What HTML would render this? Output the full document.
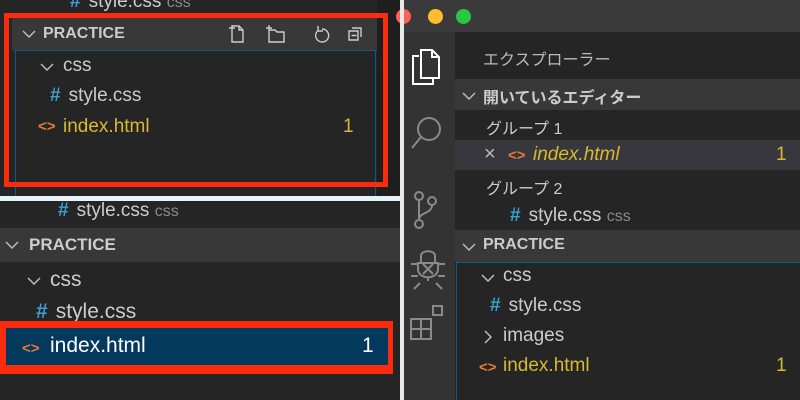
<!DOCTYPE html>
<html><head><meta charset="utf-8"><style>
*{margin:0;padding:0;box-sizing:border-box}
body{width:800px;height:400px;overflow:hidden;background:#252526;position:relative;font-family:"Liberation Sans","Noto Sans CJK JP",sans-serif;color:#ccc}
.a{position:absolute;white-space:nowrap}
.t{font-size:19px;color:#ccc}
.b{font-size:21px}
.h{font-size:16px;font-weight:bold;color:#ccc}
.y{color:#d7ba2e}
.hash{color:#3d9fd0;font-weight:bold;margin-right:8px}
.ang{color:#e8793a;font-size:15px;font-weight:bold}
.dim{color:#8b8b8b;font-size:16px}
</style></head><body>
<svg width="0" height="0" style="position:absolute"><defs>
<symbol id="cv" viewBox="0 0 14 8"><path d="M1 1l6 6 6-6" fill="none" stroke="#bbb" stroke-width="1.5"/></symbol>
<symbol id="cr" viewBox="0 0 8 14"><path d="M1 1l6 6-6 6" fill="none" stroke="#bbb" stroke-width="1.5"/></symbol>
</defs></svg>
<!-- top-left panel -->
<div class="a" style="left:377px;top:0;width:23px;height:197px;background:#1e1e1e"></div>
<div class="a t" style="left:70px;top:-9px"><span class="hash">#</span>style.css <span class="dim">css</span></div>
<div class="a" style="left:12px;top:18px;width:365px;height:33px;background:#383838"></div>
<svg class="a" style="left:22px;top:30px" width="14" height="8"><use href="#cv"/></svg>
<div class="a h" style="left:43px;top:25px">PRACTICE</div>
<svg class="a" style="left:226px;top:22px" width="140" height="24" fill="none" stroke="#ccc" stroke-width="1.4">
<path d="M6 4h7l4 4v12H6z M13 4v4h4 M3 6h6 M6 3v6"/>
<path d="M43 8h6l2 2h7v10H43z M40 6h6 M43 3v6"/>
<path d="M96 7a6.5 6.5 0 1 1-4 1.5 M92 4v5h5"/>
<path d="M123 9h9v9h-9z M126 6h9v9 M125.5 13.5h5"/>
</svg>
<div class="a" style="left:15px;top:50px;width:361px;height:147px;border:1px solid #0a5a8a;border-bottom:none"></div>
<svg class="a" style="left:40px;top:63px" width="14" height="8"><use href="#cv"/></svg>
<div class="a t" style="left:63px;top:55px">css</div>
<div class="a t" style="left:50px;top:85px"><span class="hash">#</span>style.css</div>
<div class="a" style="left:38px;top:118px"><span class="ang">&lt;&gt;</span></div>
<div class="a t y" style="left:63px;top:116px">index.html</div>
<div class="a t y" style="left:343px;top:116px">1</div>
<div class="a" style="left:4px;top:13px;width:384px;height:174px;border:5px solid #fb2c0e"></div>
<div class="a" style="left:0;top:196px;width:400px;height:5px;background:#e6f3fb"></div>
<!-- bottom-left panel -->
<div class="a t" style="left:58px;top:200px"><span class="hash">#</span>style.css <span class="dim">css</span></div>
<div class="a" style="left:0;top:228px;width:400px;height:34px;background:#383838"></div>
<svg class="a" style="left:5px;top:241px" width="14" height="8"><use href="#cv"/></svg>
<div class="a h" style="left:29px;top:235px;font-size:17px">PRACTICE</div>
<svg class="a" style="left:27px;top:277px" width="14" height="8"><use href="#cv"/></svg>
<div class="a t b" style="left:50px;top:268px">css</div>
<div class="a t b" style="left:36px;top:300px"><span class="hash">#</span>style.css</div>
<div class="a" style="left:0;top:321px;width:393px;height:53px;background:#fb2c0e"></div>
<div class="a" style="left:6px;top:328px;width:382px;height:37px;background:#04395e"></div>
<div class="a" style="left:22px;top:340px"><span class="ang">&lt;&gt;</span></div>
<div class="a t b" style="left:50px;top:334px;color:#fff">index.html</div>
<div class="a t b" style="left:362px;top:334px;color:#fff">1</div>
<!-- right window -->
<div class="a" style="left:404px;top:0;width:396px;height:32px;background:#3a3a3a"></div>
<div class="a" style="left:396px;top:9px;width:15px;height:15px;border-radius:50%;background:#fe5f57"></div>
<div class="a" style="left:428px;top:9px;width:15px;height:15px;border-radius:50%;background:#febc2e"></div>
<div class="a" style="left:456px;top:9px;width:15px;height:15px;border-radius:50%;background:#28c840"></div>
<div class="a" style="left:400px;top:0;width:4px;height:400px;background:#e8e8e8"></div>
<div class="a" style="left:404px;top:32px;width:51px;height:368px;background:#333"></div>
<svg class="a" style="left:404px;top:40px" width="51" height="340" fill="none" stroke="#8a8a8a" stroke-width="2">
<g stroke="#fff"><path d="M15 16h-6v28h20v-6 M17 10h11l7 7v21H17z M28 10v7h7"/></g>
<circle cx="25" cy="89" r="11"/><path d="M17 97l-9 11"/>
<circle cx="15" cy="156" r="4"/><circle cx="15" cy="184" r="4"/><circle cx="28" cy="161" r="4"/><path d="M15 160v20 M28 165c0 9-13 7-13 15"/>
<path d="M14 223h20v6c0 11-20 11-20 0z M24 237v4 M17 215c2-5 12-5 14 0v8H17z M7 224h7 M34 224h7 M7 236h7 M34 236h7 M10 249l6-6 M38 249l-6-6 M19 224l10 10 M29 224l-10 10"/>
<path d="M7 279h10v10H7z M17 279h10v10H17z M7 289h10v10H7z M17 289h10v10H17z M29 266h9v9h-9z"/>
</svg>
<div class="a" style="left:455px;top:32px;width:345px;height:368px;background:#252526"></div>
<div class="a" style="left:483px;top:46px;font-size:16px;color:#bbb">エクスプローラー</div>
<div class="a" style="left:455px;top:79px;width:345px;height:31px;background:#383838"></div>
<svg class="a" style="left:462px;top:92px" width="14" height="8"><use href="#cv"/></svg>
<div class="a h" style="left:483px;top:84px">開いているエディター</div>
<div class="a" style="left:486px;top:115px;font-size:16px">グループ 1</div>
<div class="a" style="left:455px;top:140px;width:345px;height:30px;background:#37373d"></div>
<div class="a" style="left:484px;top:143px;font-size:20px;color:#bbb">×</div>
<div class="a" style="left:508px;top:147px"><span class="ang">&lt;&gt;</span></div>
<div class="a t y" style="left:533px;top:144px;font-style:italic">index.html</div>
<div class="a t y" style="left:776px;top:144px">1</div>
<div class="a" style="left:486px;top:175px;font-size:16px">グループ 2</div>
<div class="a t" style="left:510px;top:205px"><span class="hash">#</span>style.css <span class="dim">css</span></div>
<div class="a" style="left:455px;top:230px;width:345px;height:32px;background:#383838"></div>
<svg class="a" style="left:462px;top:243px" width="14" height="8"><use href="#cv"/></svg>
<div class="a h" style="left:483px;top:236px">PRACTICE</div>
<div class="a" style="left:456px;top:262px;width:344px;height:138px;border-left:1px solid #0a5a8a;border-top:1px solid #0a5a8a"></div>
<svg class="a" style="left:481px;top:274px" width="14" height="8"><use href="#cv"/></svg>
<div class="a t" style="left:503px;top:265px">css</div>
<div class="a t" style="left:490px;top:295px"><span class="hash">#</span>style.css</div>
<svg class="a" style="left:484px;top:330px" width="8" height="14"><use href="#cr"/></svg>
<div class="a t" style="left:503px;top:325px">images</div>
<div class="a" style="left:479px;top:359px"><span class="ang">&lt;&gt;</span></div>
<div class="a t y" style="left:503px;top:355px">index.html</div>
<div class="a t y" style="left:776px;top:355px">1</div>
</body></html>
